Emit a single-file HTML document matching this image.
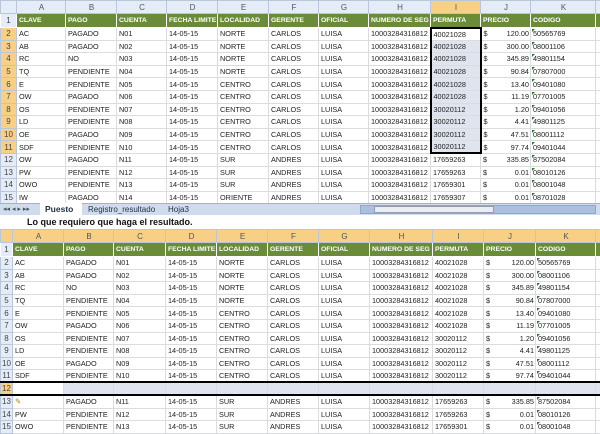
<!DOCTYPE html><html><head><style>
*{margin:0;padding:0;box-sizing:border-box}
body{width:600px;height:424px;overflow:hidden;background:#fff;font-family:"Liberation Sans",sans-serif;position:relative}
table{position:absolute;border-collapse:collapse;table-layout:fixed;font-size:7.3px;color:#222}
td{border:1px solid #dadcdd;height:12.6px;padding:0 1px 0 2px;white-space:nowrap;overflow:hidden;line-height:11px}
tr.ch td{background:#e4ecf7;text-align:center;color:#555;font-size:8px;height:13px;border-color:#b9c7d9}
tr.ch td.o{background:#f7cf85}
td.rh{background:#e4ecf7;text-align:center;color:#444;padding:0;border-color:#b9c7d9;font-size:8px}
td.rho{background:#f7cf85}
tr.h td{background:#6a8c38;color:#fff;font-weight:bold;height:14px;border-color:#fff;font-size:6.8px}
tr.h td.rh{background:#e4ecf7;color:#444;font-weight:normal;font-size:8px}
tr.h td.rho{background:#f7cf85}
.r{text-align:right}
.s{background:#dfe4ef}
.k{position:relative}
.k:before{content:"";position:absolute;left:1px;top:1px;border-top:3px solid #2a7a2a;border-right:3px solid transparent}
</style></head><body>
<table style="left:0;top:0;width:600px">
<colgroup><col style="width:16px"><col style="width:49px"><col style="width:51px"><col style="width:50px"><col style="width:51px"><col style="width:51px"><col style="width:50px"><col style="width:50px"><col style="width:62px"><col style="width:50px"><col style="width:50px"><col style="width:65px"><col style="width:5px"></colgroup>
<tr class="ch"><td></td><td>A</td><td>B</td><td>C</td><td>D</td><td>E</td><td>F</td><td>G</td><td>H</td><td class="o">I</td><td>J</td><td>K</td><td></td></tr>
<tr class="h"><td class="rh">1</td><td>CLAVE</td><td>PAGO</td><td>CUENTA</td><td>FECHA LIMITE</td><td>LOCALIDAD</td><td>GERENTE</td><td>OFICIAL</td><td>NUMERO DE SEG</td><td>PERMUTA</td><td>PRECIO</td><td>CODIGO</td><td></td></tr>
<tr><td class="rh rho">2</td><td>AC</td><td>PAGADO</td><td>N01</td><td>14-05-15</td><td>NORTE</td><td>CARLOS</td><td>LUISA</td><td>10003284316812</td><td style="border:2px solid #000;border-bottom:1px solid #dadcdd">40021028</td><td>$ <span style="float:right">120.00</span></td><td class="k">50565769</td><td></td></tr>
<tr><td class="rh rho">3</td><td>AB</td><td>PAGADO</td><td>N02</td><td>14-05-15</td><td>NORTE</td><td>CARLOS</td><td>LUISA</td><td>10003284316812</td><td class="s" style="border-left:2px solid #000;border-right:2px solid #000">40021028</td><td>$ <span style="float:right">300.00</span></td><td class="k">08001106</td><td></td></tr>
<tr><td class="rh rho">4</td><td>RC</td><td>NO</td><td>N03</td><td>14-05-15</td><td>NORTE</td><td>CARLOS</td><td>LUISA</td><td>10003284316812</td><td class="s" style="border-left:2px solid #000;border-right:2px solid #000">40021028</td><td>$ <span style="float:right">345.89</span></td><td class="k">49801154</td><td></td></tr>
<tr><td class="rh rho">5</td><td>TQ</td><td>PENDIENTE</td><td>N04</td><td>14-05-15</td><td>NORTE</td><td>CARLOS</td><td>LUISA</td><td>10003284316812</td><td class="s" style="border-left:2px solid #000;border-right:2px solid #000">40021028</td><td>$ <span style="float:right">90.84</span></td><td class="k">07807000</td><td></td></tr>
<tr><td class="rh rho">6</td><td>E</td><td>PENDIENTE</td><td>N05</td><td>14-05-15</td><td>CENTRO</td><td>CARLOS</td><td>LUISA</td><td>10003284316812</td><td class="s" style="border-left:2px solid #000;border-right:2px solid #000">40021028</td><td>$ <span style="float:right">13.40</span></td><td class="k">09401080</td><td></td></tr>
<tr><td class="rh rho">7</td><td>OW</td><td>PAGADO</td><td>N06</td><td>14-05-15</td><td>CENTRO</td><td>CARLOS</td><td>LUISA</td><td>10003284316812</td><td class="s" style="border-left:2px solid #000;border-right:2px solid #000">40021028</td><td>$ <span style="float:right">11.19</span></td><td class="k">07701005</td><td></td></tr>
<tr><td class="rh rho">8</td><td>OS</td><td>PENDIENTE</td><td>N07</td><td>14-05-15</td><td>CENTRO</td><td>CARLOS</td><td>LUISA</td><td>10003284316812</td><td class="s" style="border-left:2px solid #000;border-right:2px solid #000">30020112</td><td>$ <span style="float:right">1.20</span></td><td class="k">09401056</td><td></td></tr>
<tr><td class="rh rho">9</td><td>LD</td><td>PENDIENTE</td><td>N08</td><td>14-05-15</td><td>CENTRO</td><td>CARLOS</td><td>LUISA</td><td>10003284316812</td><td class="s" style="border-left:2px solid #000;border-right:2px solid #000">30020112</td><td>$ <span style="float:right">4.41</span></td><td class="k">49801125</td><td></td></tr>
<tr><td class="rh rho">10</td><td>OE</td><td>PAGADO</td><td>N09</td><td>14-05-15</td><td>CENTRO</td><td>CARLOS</td><td>LUISA</td><td>10003284316812</td><td class="s" style="border-left:2px solid #000;border-right:2px solid #000">30020112</td><td>$ <span style="float:right">47.51</span></td><td class="k">08001112</td><td></td></tr>
<tr><td class="rh rho">11</td><td>SDF</td><td>PENDIENTE</td><td>N10</td><td>14-05-15</td><td>CENTRO</td><td>CARLOS</td><td>LUISA</td><td>10003284316812</td><td class="s" style="border:2px solid #000;border-top:1px solid #dadcdd">30020112</td><td>$ <span style="float:right">97.74</span></td><td class="k">09401044</td><td></td></tr>
<tr><td class="rh">12</td><td>OW</td><td>PAGADO</td><td>N11</td><td>14-05-15</td><td>SUR</td><td>ANDRES</td><td>LUISA</td><td>10003284316812</td><td>17659263</td><td>$ <span style="float:right">335.85</span></td><td class="k">87502084</td><td></td></tr>
<tr><td class="rh">13</td><td>PW</td><td>PENDIENTE</td><td>N12</td><td>14-05-15</td><td>SUR</td><td>ANDRES</td><td>LUISA</td><td>10003284316812</td><td>17659263</td><td>$ <span style="float:right">0.01</span></td><td class="k">08010126</td><td></td></tr>
<tr><td class="rh">14</td><td>OWO</td><td>PENDIENTE</td><td>N13</td><td>14-05-15</td><td>SUR</td><td>ANDRES</td><td>LUISA</td><td>10003284316812</td><td>17659301</td><td>$ <span style="float:right">0.01</span></td><td class="k">08001048</td><td></td></tr>
<tr><td class="rh">15</td><td>IW</td><td>PAGADO</td><td>N14</td><td>14-05-15</td><td>ORIENTE</td><td>ANDRES</td><td>LUISA</td><td>10003284316812</td><td>17659307</td><td>$ <span style="float:right">0.01</span></td><td class="k">08701028</td><td></td></tr>
</table>
<div style="position:absolute;left:0;top:203px;width:600px;height:12px;background:#cfdcee;border-top:1px solid #9fb3cf;font-size:8px;color:#234">
<span style="position:absolute;left:3px;top:1px;font-size:7px;color:#456">◂◂ ◂ ▸ ▸▸</span>
<span style="position:absolute;left:40px;top:-1px;height:12px;width:42px;background:#fff;font-weight:bold;padding:1px 0 0 5px;font-size:8.5px">Puesto</span>
<span style="position:absolute;left:88px;top:1px">Registro_resultado</span>
<span style="position:absolute;left:168px;top:1px">Hoja3</span>
<span style="position:absolute;left:360px;top:1px;width:236px;height:9px;background:#aac0df;border:1px solid #8fa7c8"></span>
<span style="position:absolute;left:374px;top:2px;width:120px;height:7px;background:#e8eef7;border:1px solid #99a"></span>
</div>
<div style="position:absolute;left:27px;top:217px;font-size:9px;font-weight:bold;color:#111">Lo que requiero que haga el resultado.</div>
<table style="left:0;top:229px;width:600px">
<colgroup><col style="width:12px"><col style="width:51px"><col style="width:50px"><col style="width:52px"><col style="width:51px"><col style="width:51px"><col style="width:51px"><col style="width:51px"><col style="width:63px"><col style="width:51px"><col style="width:52px"><col style="width:60px"><col style="width:5px"></colgroup>
<tr class="ch"><td class="o"></td><td class="o">A</td><td class="o">B</td><td class="o">C</td><td class="o">D</td><td class="o">E</td><td class="o">F</td><td class="o">G</td><td class="o">H</td><td class="o">I</td><td class="o">J</td><td class="o">K</td><td class="o"></td></tr>
<tr class="h"><td class="rh">1</td><td>CLAVE</td><td>PAGO</td><td>CUENTA</td><td>FECHA LIMITE</td><td>LOCALIDAD</td><td>GERENTE</td><td>OFICIAL</td><td>NUMERO DE SEG</td><td>PERMUTA</td><td>PRECIO</td><td>CODIGO</td><td></td></tr>
<tr><td class="rh">2</td><td>AC</td><td>PAGADO</td><td>N01</td><td>14-05-15</td><td>NORTE</td><td>CARLOS</td><td>LUISA</td><td>10003284316812</td><td>40021028</td><td>$ <span style="float:right">120.00</span></td><td class="k">50565769</td><td></td></tr>
<tr><td class="rh">3</td><td>AB</td><td>PAGADO</td><td>N02</td><td>14-05-15</td><td>NORTE</td><td>CARLOS</td><td>LUISA</td><td>10003284316812</td><td>40021028</td><td>$ <span style="float:right">300.00</span></td><td class="k">08001106</td><td></td></tr>
<tr><td class="rh">4</td><td>RC</td><td>NO</td><td>N03</td><td>14-05-15</td><td>NORTE</td><td>CARLOS</td><td>LUISA</td><td>10003284316812</td><td>40021028</td><td>$ <span style="float:right">345.89</span></td><td class="k">49801154</td><td></td></tr>
<tr><td class="rh">5</td><td>TQ</td><td>PENDIENTE</td><td>N04</td><td>14-05-15</td><td>NORTE</td><td>CARLOS</td><td>LUISA</td><td>10003284316812</td><td>40021028</td><td>$ <span style="float:right">90.84</span></td><td class="k">07807000</td><td></td></tr>
<tr><td class="rh">6</td><td>E</td><td>PENDIENTE</td><td>N05</td><td>14-05-15</td><td>CENTRO</td><td>CARLOS</td><td>LUISA</td><td>10003284316812</td><td>40021028</td><td>$ <span style="float:right">13.40</span></td><td class="k">09401080</td><td></td></tr>
<tr><td class="rh">7</td><td>OW</td><td>PAGADO</td><td>N06</td><td>14-05-15</td><td>CENTRO</td><td>CARLOS</td><td>LUISA</td><td>10003284316812</td><td>40021028</td><td>$ <span style="float:right">11.19</span></td><td class="k">07701005</td><td></td></tr>
<tr><td class="rh">8</td><td>OS</td><td>PENDIENTE</td><td>N07</td><td>14-05-15</td><td>CENTRO</td><td>CARLOS</td><td>LUISA</td><td>10003284316812</td><td>30020112</td><td>$ <span style="float:right">1.20</span></td><td class="k">09401056</td><td></td></tr>
<tr><td class="rh">9</td><td>LD</td><td>PENDIENTE</td><td>N08</td><td>14-05-15</td><td>CENTRO</td><td>CARLOS</td><td>LUISA</td><td>10003284316812</td><td>30020112</td><td>$ <span style="float:right">4.41</span></td><td class="k">49801125</td><td></td></tr>
<tr><td class="rh">10</td><td>OE</td><td>PAGADO</td><td>N09</td><td>14-05-15</td><td>CENTRO</td><td>CARLOS</td><td>LUISA</td><td>10003284316812</td><td>30020112</td><td>$ <span style="float:right">47.51</span></td><td class="k">08001112</td><td></td></tr>
<tr style="border-bottom:2px solid #000"><td class="rh">11</td><td>SDF</td><td>PENDIENTE</td><td>N10</td><td>14-05-15</td><td>CENTRO</td><td>CARLOS</td><td>LUISA</td><td>10003284316812</td><td>30020112</td><td>$ <span style="float:right">97.74</span></td><td class="k">09401044</td><td></td></tr>
<tr style="border-bottom:2px solid #000"><td class="rh rho">12</td><td style="background:#fff"></td><td class="s"></td><td class="s"></td><td class="s"></td><td class="s"></td><td class="s"></td><td class="s"></td><td class="s"></td><td class="s"></td><td class="s"></td><td class="s"></td><td class="s"></td></tr>
<tr><td class="rh">13</td><td style="color:#a80">✎</td><td>PAGADO</td><td>N11</td><td>14-05-15</td><td>SUR</td><td>ANDRES</td><td>LUISA</td><td>10003284316812</td><td>17659263</td><td>$ <span style="float:right">335.85</span></td><td class="k">87502084</td><td></td></tr>
<tr><td class="rh">14</td><td>PW</td><td>PENDIENTE</td><td>N12</td><td>14-05-15</td><td>SUR</td><td>ANDRES</td><td>LUISA</td><td>10003284316812</td><td>17659263</td><td>$ <span style="float:right">0.01</span></td><td class="k">08010126</td><td></td></tr>
<tr><td class="rh">15</td><td>OWO</td><td>PENDIENTE</td><td>N13</td><td>14-05-15</td><td>SUR</td><td>ANDRES</td><td>LUISA</td><td>10003284316812</td><td>17659301</td><td>$ <span style="float:right">0.01</span></td><td class="k">08001048</td><td></td></tr>
</table>
</body></html>
